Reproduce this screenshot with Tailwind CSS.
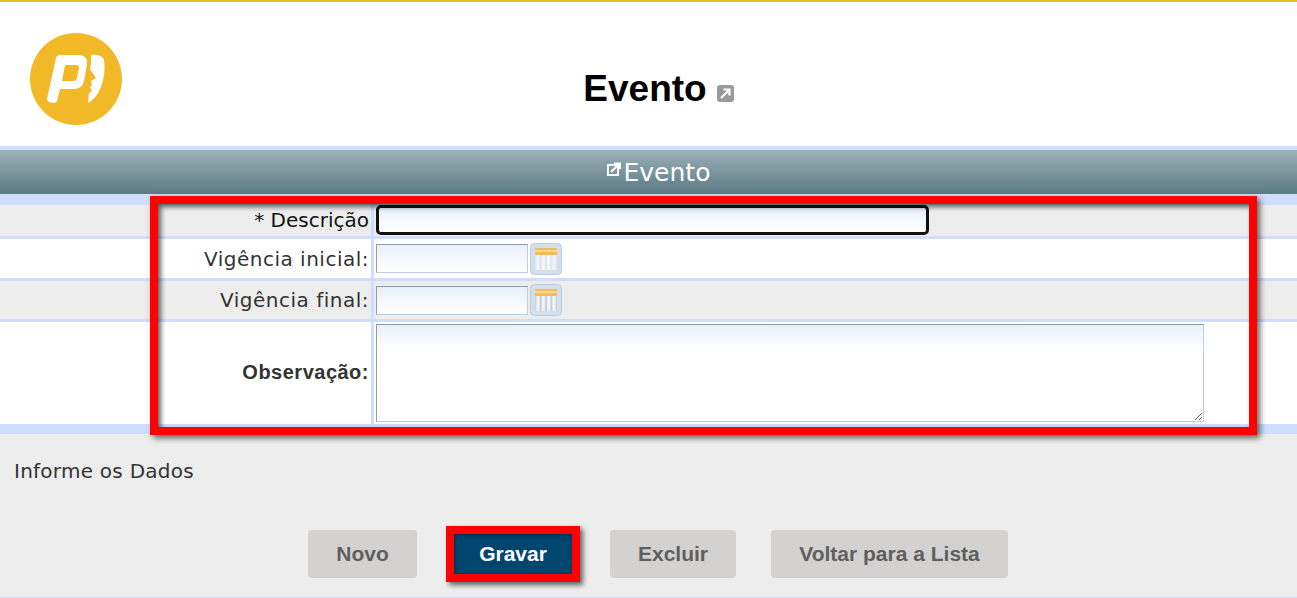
<!DOCTYPE html>
<html lang="pt-BR">
<head>
    <meta charset="UTF-8">
    <title>Evento</title>
    <script src="https://cdn.jsdelivr.net/npm/@tailwindcss/browser@4"></script>
</head>
<body class="bg-[#ededed] h-[598px] overflow-hidden font-['DejaVu_Sans',sans-serif] text-[#333]">
    <!-- Header -->
    <header class="bg-white h-[150px] border-t-2 border-b-4 border-t-[#f0b81f] border-b-[#cfdefc] relative flex justify-center">
        <svg class="absolute left-[30px] top-[31px] w-[92px] h-[92px]" viewBox="0 0 92 92">
            <circle cx="46" cy="46" r="46" fill="#f1b827"/>
            <path fill-rule="evenodd" fill="#fff" d="M26 25 Q27 22 30 22 L50 22 Q58 23 57 31 L54 48 Q52 56 44 56 L30 56 L27 68 Q26 70 24 70 L19 69 Q17 68 17 66 Z M35 32 L32 48 L43 48 Q46 48 47 45 L49 35 Q49 32 46 32 Z"/>
            <path fill="#fff" d="M61 22 Q72 21 74 27 Q76 40 71 54 Q66 66 58 70 L59 60 L62 58 L60 54 L62 52 L61 48 L66 45 L60 36 L61 31 Z"/>
        </svg>
        <div class="flex items-center gap-[10px] ml-[20px] mt-[53px] h-[66px]">
            <h1 class="font-['Liberation_Sans',sans-serif] font-bold text-[37px] text-black leading-none">Evento</h1>
            <svg class="w-[17px] h-[17px] mt-[11px]" viewBox="0 0 17 17">
                <rect width="17" height="17" rx="3" fill="#999"/>
                <path d="M4 13 L11 6 M6.500 4.500 H12.500 V10.500" stroke="#fff" stroke-width="2.200" fill="none"/>
            </svg>
        </div>
    </header>

    <!-- Title bar -->
    <div class="h-[44px] pl-[20px] bg-gradient-to-b from-[#9cb0b7] to-[#5c7985] flex items-center justify-center gap-[3px] text-white text-[25px]">
        <svg class="w-[14px] h-[14px] mb-[6px]" viewBox="0 0 14 14">
            <rect x="1" y="3" width="10" height="10" fill="none" stroke="#fff" stroke-width="2"/>
            <path d="M4 10 L11 3 M7 1.500 H13 V7" stroke="#fff" stroke-width="2" fill="none"/>
        </svg>
        <span class="leading-none">Evento</span>
    </div>

    <!-- Form -->
    <main class="relative border-t-[11px] border-b-[10px] border-[#cfdefc] bg-[#cfdefc]">
        <div class="flex flex-col gap-[3px] text-[20px] tracking-[0.5px]">
            <div class="h-[31px] bg-[#ededed] flex">
                <label class="w-[371px] flex items-center justify-end pr-[2px] pb-[1px] tracking-normal text-[#111]">* Descrição</label>
                <div class="w-[3px] bg-[#cfdefc]"></div>
                <div class="pl-[2px]">
                    <input type="text" class="block w-[553px] h-[30px] border-[3px] border-[#111] rounded-[5px] bg-gradient-to-b from-[#e9f0fc] to-white">
                </div>
            </div>
            <div class="h-[39px] bg-white flex">
                <label class="w-[371px] flex items-center justify-end pr-[2px]">Vigência inicial:</label>
                <div class="w-[3px] bg-[#cfdefc]"></div>
                <div class="pl-[2px] flex items-center gap-[2px]">
                    <input type="text" class="block w-[152px] h-[29px] border border-[#b9cde6] border-t-[#8d9bb5] border-l-[#8d9bb5] bg-gradient-to-b from-[#e9f0fc] to-white">
                    <svg class="w-[32px] h-[32px]" viewBox="0 0 32 32">
                        <rect x="0.500" y="0.500" width="31" height="31" rx="4" fill="#d3dfec" stroke="#bccbdc"/>
                        <rect x="5" y="5" width="22" height="22" fill="#dfe6ee"/>
                        <rect x="5" y="5" width="22" height="7" rx="1" fill="#f4bb57"/>
                        <rect x="5" y="7" width="22" height="2" fill="#fad88f"/>
                        <path d="M8 12 V27 M13.300 12 V27 M18.700 12 V27 M24 12 V27" stroke="#f3f5f8" stroke-width="3"/>
                    </svg>
                </div>
            </div>
            <div class="h-[38px] bg-[#ededed] flex">
                <label class="w-[371px] flex items-center justify-end pr-[2px]">Vigência final:</label>
                <div class="w-[3px] bg-[#cfdefc]"></div>
                <div class="pl-[2px] flex items-center gap-[2px]">
                    <input type="text" class="block w-[152px] h-[29px] border border-[#b9cde6] border-t-[#8d9bb5] border-l-[#8d9bb5] bg-gradient-to-b from-[#e9f0fc] to-white">
                    <svg class="w-[32px] h-[32px]" viewBox="0 0 32 32">
                        <rect x="0.500" y="0.500" width="31" height="31" rx="4" fill="#d3dfec" stroke="#bccbdc"/>
                        <rect x="5" y="5" width="22" height="22" fill="#c9d2dc"/>
                        <rect x="5" y="5" width="22" height="7" rx="1" fill="#f4bb57"/>
                        <rect x="5" y="7" width="22" height="2" fill="#fad88f"/>
                        <path d="M8 12 V27 M13.300 12 V27 M18.700 12 V27 M24 12 V27" stroke="#f3f5f8" stroke-width="3"/>
                    </svg>
                </div>
            </div>
            <div class="h-[102px] bg-white flex">
                <label class="w-[371px] flex items-center justify-end pr-[2px] pb-[2px] font-['Liberation_Sans',sans-serif] font-bold text-[20px]">Observação:</label>
                <div class="w-[3px] bg-[#cfdefc]"></div>
                <div class="pl-[2px] pt-[2px]">
                    <textarea class="block w-[828px] h-[98px] border border-[#b9cde6] border-t-[#8d9bb5] border-l-[#8d9bb5] bg-[linear-gradient(#e9f0fc,#fff_25px)]"></textarea>
                </div>
            </div>
        </div>
        <!-- Highlight box drawn over the form -->
        <div class="absolute left-[150px] top-[-9px] w-[1107px] h-[239px] border-8 border-[#f00] shadow-[3px_3px_6px_rgba(0,0,0,0.6),inset_3px_3px_5px_rgba(0,0,0,0.6)] pointer-events-none"></div>
    </main>

    <p class="pl-[14px] pt-[24px] text-[20px] tracking-[0.25px] leading-[26px]">Informe os Dados</p>

    <!-- Actions -->
    <div class="flex items-center pl-[308px] mt-[42px] pb-[15px] border-b border-[#cfdefc] font-['Liberation_Sans',sans-serif] font-bold text-[21px]">
        <button class="w-[109px] h-[48px] rounded bg-[#d3d2d0] text-[#5f5f5f]">Novo</button>
        <button class="ml-[29px] w-[134px] h-[56px] border-8 border-[#f00] bg-[#01466f] text-white shadow-[3px_3px_5px_rgba(0,0,0,0.6),inset_1px_1px_4px_rgba(0,0,0,0.4)]">Gravar</button>
        <button class="ml-[30px] w-[126px] h-[48px] rounded bg-[#d3d2d0] text-[#5f5f5f]">Excluir</button>
        <button class="ml-[35px] w-[237px] h-[48px] rounded bg-[#d3d2d0] text-[#5f5f5f]">Voltar para a Lista</button>
    </div>
</body>
</html>
